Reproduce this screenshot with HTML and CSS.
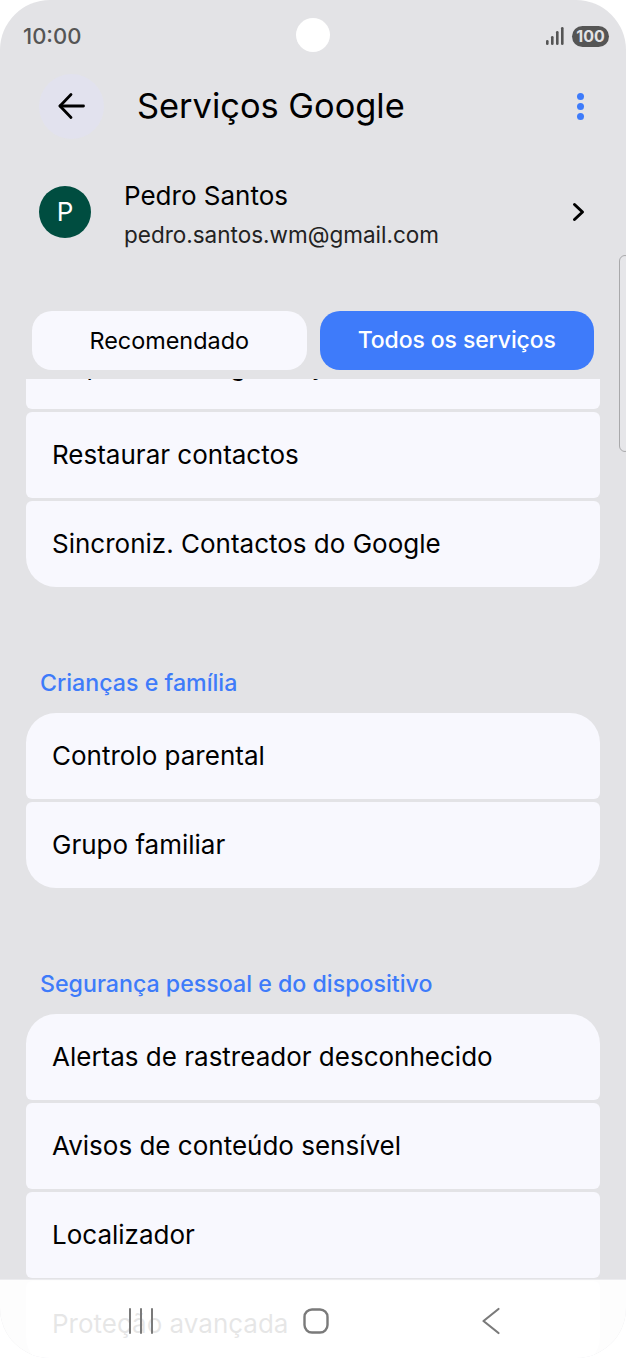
FILE: index.html
```html
<!DOCTYPE html>
<html lang="pt">
<head>
  <meta charset="UTF-8">
  <title>Serviços Google</title>
  <link rel="stylesheet" href="styles.css">
</head>
<body>
  <div class="phone">

    <!-- Status bar -->
    <div class="status-bar">
      <span class="clock">10:00</span>
      <span class="camera"></span>
      <div class="status-icons">
        <svg class="signal" width="18" height="20" viewBox="0 0 18 20">
          <rect x="0" y="14" width="2.6" height="5" rx="1.3"/>
          <rect x="5" y="10" width="2.6" height="9" rx="1.3"/>
          <rect x="10" y="5" width="2.6" height="14" rx="1.3"/>
          <rect x="15" y="1" width="2.6" height="18" rx="1.3"/>
        </svg>
        <span class="battery">100</span>
      </div>
    </div>

    <!-- Title bar -->
    <header class="app-bar">
      <button class="back-btn">
        <svg width="30" height="30" viewBox="0 0 30 30" fill="none" stroke="#000" stroke-width="2.8" stroke-linecap="round" stroke-linejoin="round">
          <path d="M26.5 15H3"/>
          <path d="M14 3.5L3 15l11 11.5"/>
        </svg>
      </button>
      <h1>Serviços Google</h1>
      <div class="more-btn"><i></i><i></i><i></i></div>
    </header>

    <!-- Account -->
    <div class="account">
      <div class="avatar">P</div>
      <div class="account-info">
        <div class="account-name">Pedro Santos</div>
        <div class="account-mail">pedro.santos.wm@gmail.com</div>
      </div>
      <svg class="chevron" width="14" height="20" viewBox="0 0 14 20" fill="none" stroke="#000" stroke-width="3" stroke-linecap="round" stroke-linejoin="round">
        <path d="M2.5 2.5L10.5 10l-8 7.5"/>
      </svg>
    </div>

    <!-- Tabs -->
    <div class="tabs">
      <div class="tab">Recomendado</div>
      <div class="tab active">Todos os serviços</div>
    </div>

    <span class="scroll-handle"></span>

    <!-- Service list, scrolled part way down -->
    <main class="list-viewport">
      <div class="list">
        <section class="group first">
          <div class="row">Copiar do Google Play</div>
          <div class="row">Restaurar contactos</div>
          <div class="row">Sincroniz. Contactos do Google</div>
        </section>

        <h2>Crianças e família</h2>
        <section class="group">
          <div class="row">Controlo parental</div>
          <div class="row">Grupo familiar</div>
        </section>

        <h2>Segurança pessoal e do dispositivo</h2>
        <section class="group">
          <div class="row">Alertas de rastreador desconhecido</div>
          <div class="row">Avisos de conteúdo sensível</div>
          <div class="row">Localizador</div>
          <div class="row">Proteção avançada</div>
        </section>
      </div>
    </main>

    <!-- Navigation bar -->
    <nav class="nav-bar">
      <div class="nav-item">
        <svg width="26" height="28" viewBox="0 0 26 28" fill="none" stroke="#7a7a7a" stroke-width="2" stroke-linecap="round">
          <path d="M2 2v24M13 2v24M24 2v24"/>
        </svg>
      </div>
      <div class="nav-item">
        <svg width="28" height="28" viewBox="0 0 28 28" fill="none" stroke="#7a7a7a" stroke-width="2.4">
          <rect x="2.5" y="2.5" width="23" height="23" rx="7.5"/>
        </svg>
      </div>
      <div class="nav-item">
        <svg width="20" height="28" viewBox="0 0 20 28" fill="none" stroke="#7a7a7a" stroke-width="2.2" stroke-linecap="round" stroke-linejoin="round">
          <path d="M17.5 2L2.5 14l15 12"/>
        </svg>
      </div>
    </nav>
  </div>
</body>
</html>
```

FILE: styles.css
```css
/* General Styles */
* {
  box-sizing: border-box;
}

html, body {
  margin: 0;
  padding: 0;
  background-color: #fff;
}

body {
  font-family: Inter, "Noto Sans", sans-serif;
  color: #000;
}

.phone {
  position: relative;
  width: 626px;
  height: 1358px;
  overflow: hidden;
  border-radius: 50px;
  background-color: #e3e3e6;
}

/* Status bar */
.status-bar {
  position: relative;
  display: flex;
  align-items: center;
  justify-content: space-between;
  height: 72px;
  padding: 0 17px 0 23px;
}

.clock {
  font-size: 22px;
  font-weight: 500;
  color: #555;
}

.camera {
  position: absolute;
  left: 296px;
  top: 18px;
  width: 34px;
  height: 34px;
  border-radius: 50%;
  background-color: #fff;
}

.status-icons {
  display: flex;
  align-items: center;
  gap: 8px;
}

.signal {
  fill: #555;
}

.battery {
  width: 37px;
  height: 21px;
  border-radius: 11px;
  background-color: #555;
  color: #e3e3e6;
  font-size: 16px;
  font-weight: 700;
  line-height: 21px;
  text-align: center;
}

/* Title bar */
.app-bar {
  display: flex;
  align-items: center;
  height: 68px;
  padding: 0 38px 0 39px;
}

.back-btn {
  display: flex;
  align-items: center;
  justify-content: center;
  width: 65px;
  height: 65px;
  padding: 0;
  border: none;
  border-radius: 50%;
  background-color: #e2e2ee;
}

.app-bar h1 {
  flex: 1;
  margin: 0 0 2px 33px;
  font-size: 34.4px;
  font-weight: 400;
}

.more-btn {
  display: flex;
  flex-direction: column;
  gap: 3px;
  margin-right: 4px;
}

.more-btn i {
  width: 7px;
  height: 7px;
  border-radius: 50%;
  background-color: #3e7bfa;
}

/* Account */
.account {
  display: flex;
  align-items: center;
  height: 92px;
  margin-top: 30px;
  padding: 0 38px 0 39px;
}

.avatar {
  width: 52px;
  height: 52px;
  margin-top: -8px;
  border-radius: 50%;
  background-color: #004d40;
  color: #fff;
  font-size: 26px;
  line-height: 52px;
  text-align: center;
}

.account-info {
  flex: 1;
  margin: 0 0 2px 33px;
}

.account-name {
  font-size: 26px;
  line-height: 40px;
}

.account-mail {
  font-size: 22.5px;
  line-height: 38px;
  color: #222;
}

.chevron {
  margin-right: 2px;
  margin-top: -8px;
}

/* Tabs */
.tabs {
  display: flex;
  gap: 13px;
  height: 59px;
  margin-top: 49px;
  padding: 0 32px;
}

.tab {
  flex: 1;
  border-radius: 20px;
  background-color: #f8f8fe;
  font-size: 23.4px;
  line-height: 59px;
  text-align: center;
}

.tab.active {
  background-color: #3e7bfa;
  color: #fff;
  font-weight: 500;
  font-size: 23px;
  letter-spacing: -0.1px;
}

.scroll-handle {
  position: absolute;
  left: 619px;
  top: 255px;
  width: 12px;
  height: 197px;
  border: 1px solid #a9a9ab;
  border-radius: 6px;
  background-color: #e6e6e9;
}

/* Service list */
.list-viewport {
  height: 979px;
  margin-top: 9px;
  overflow: hidden;
}

.list {
  margin-top: -56px;
  padding: 0 26px;
}

.group {
  display: flex;
  flex-direction: column;
  gap: 3px;
  overflow: hidden;
  border-radius: 30px;
}

.group.first {
  border-radius: 6px 6px 30px 30px;
}

.row {
  display: flex;
  align-items: center;
  height: 86px;
  padding: 0 26px 2px;
  border-radius: 6px;
  background-color: #f8f8fe;
  font-size: 26px;
}

.list h2 {
  height: 30px;
  margin: 81px 0 15px 14px;
  color: #3e7bfa;
  font-size: 23.2px;
  font-weight: 500;
  line-height: 30px;
}

/* Navigation bar */
.nav-bar {
  position: absolute;
  left: 0;
  right: 0;
  bottom: 0;
  display: flex;
  justify-content: center;
  align-items: center;
  height: 79px;
  padding: 3px 0 0 6px;
  border-top: 1px solid #ececef;
  background-color: rgba(255, 255, 255, 0.9);
}

.nav-item {
  display: flex;
  justify-content: center;
  width: 175px;
}
```
